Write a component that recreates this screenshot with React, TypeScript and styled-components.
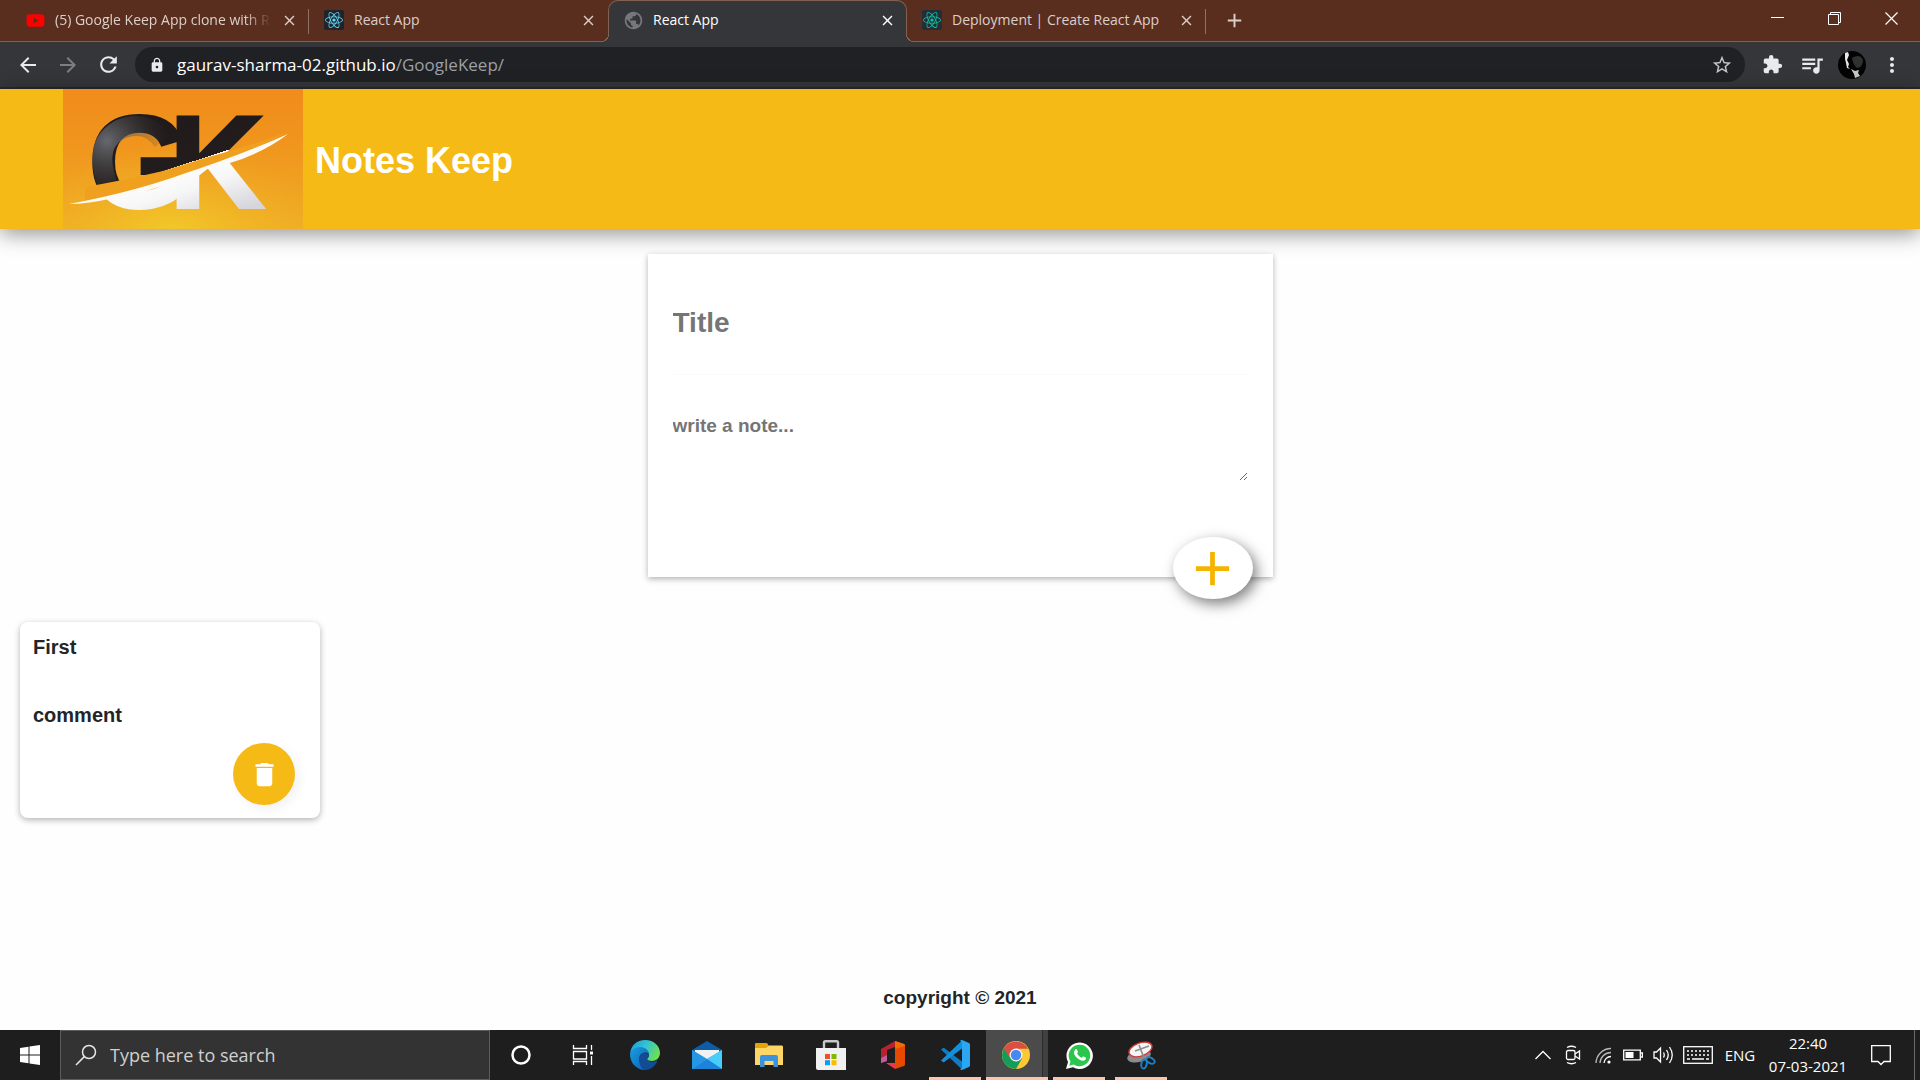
import React from "react";
import styled, { createGlobalStyle, css } from "styled-components";
import {
  MdAdd,
  MdArrowBack,
  MdArrowForward,
  MdDelete,
  MdExtension,
  MdLock,
  MdMoreVert,
  MdQueueMusic,
  MdRefresh,
  MdStarBorder,
  MdClose,
  MdPublic,
} from "react-icons/md";
import { FaReact, FaYoutube } from "react-icons/fa";

const ui = `"Open Sans", "Noto Sans", sans-serif`;
const brand = `"Liberation Sans", Arial, sans-serif`;

const GlobalStyle = createGlobalStyle`
  *, *::before, *::after { box-sizing: border-box; }
  body { margin: 0; background: #fefefe; }
  button { border: 0; padding: 0; background: none; color: inherit; font: inherit; cursor: pointer; }
  svg { display: block; flex-shrink: 0; }
`;

const Screen = styled.div`
  display: flex;
  flex-direction: column;
  min-height: 100vh;
  font-family: ${ui};
`;

/* ---------- browser ---------- */

const TabStrip = styled.nav`
  display: flex;
  height: 42px;
  padding-left: 10px;
  background: #5a2e1e;
  box-shadow: inset 0 -1px #84614f;
  color: #dccfca;
`;

const Tab = styled.div<{ $active?: boolean; $divider?: boolean }>`
  position: relative;
  display: flex;
  align-items: center;
  gap: 10px;
  width: 299px;
  padding: 0 11px 2px 15px;
  ${(p) =>
    p.$divider &&
    css`
      &::after {
        content: "";
        position: absolute;
        right: 0;
        top: 9px;
        width: 1px;
        height: 25px;
        background: #8f7265;
      }
    `}
  ${(p) =>
    p.$active &&
    css`
      padding: 0 10px 3px 14px;
      border: 1px solid #84614f;
      border-bottom: 0;
      border-radius: 10px 10px 0 0;
      background: #35363a;
      color: #ffffff;
      &::before,
      &::after {
        content: "";
        position: absolute;
        bottom: 0;
        width: 8px;
        height: 8px;
      }
      &::before {
        right: 100%;
        background: radial-gradient(circle at 0 0, #5a2e1e 7px, #84614f 7px, #84614f 8px, #35363a 8px);
      }
      &::after {
        left: 100%;
        background: radial-gradient(circle at 100% 0, #5a2e1e 7px, #84614f 7px, #84614f 8px, #35363a 8px);
      }
    `}
`;

const Favicon = styled.span<{ $bg?: string; $color: string }>`
  display: flex;
  align-items: center;
  justify-content: center;
  width: 20px;
  height: 20px;
  border-radius: 2px;
  background: ${(p) => p.$bg ?? "transparent"};
  color: ${(p) => p.$color};
`;

const TabTitle = styled.span<{ $fade?: boolean }>`
  flex: 1;
  overflow: hidden;
  white-space: nowrap;
  font-size: 14px;
  line-height: 20px;
  ${(p) => p.$fade && "mask-image: linear-gradient(90deg, #000 88%, transparent);"}
`;

const NewTab = styled.button`
  width: 56px;
  padding-bottom: 2px;
  display: flex;
  align-items: center;
  justify-content: center;
`;

const WindowControls = styled.div`
  display: flex;
  margin-left: auto;
  height: 36px;
  color: #ffffff;
`;

const WindowButton = styled.button`
  display: flex;
  align-items: center;
  justify-content: center;
  width: 57px;
`;

const Toolbar = styled.div`
  display: flex;
  align-items: center;
  height: 47px;
  padding: 0 8px;
  border-bottom: 2px solid #27282b;
  background: #35363a;
  color: #e8eaed;
`;

const ToolButton = styled.button<{ $dim?: boolean }>`
  display: flex;
  align-items: center;
  justify-content: center;
  width: 40px;
  height: 36px;
  color: ${(p) => (p.$dim ? "#7d7e81" : "inherit")};
`;

const Omnibox = styled.div`
  display: flex;
  align-items: center;
  flex: 1;
  gap: 12px;
  height: 35px;
  margin: 0 7px;
  padding: 0 3px 0 14px;
  border-radius: 18px;
  background: #202124;
`;

const Address = styled.a`
  flex: 1;
  color: #9aa0a6;
  font-size: 17px;
  line-height: 24px;
  text-decoration: none;
  b { color: #ffffff; font-weight: 400; }
`;

/* ---------- notes page ---------- */

const Page = styled.div`
  display: flex;
  flex: 1;
  flex-direction: column;
  font-family: ${brand};
  font-weight: 700;
  color: #212529;
`;

const Header = styled.header`
  display: flex;
  align-items: center;
  gap: 12px;
  height: 140px;
  padding-left: 63px;
  background: #f5ba15;
  box-shadow: 0 5px 20px rgba(0, 0, 0, 0.42);
`;

const Heading = styled.h1`
  margin: 0;
  padding-top: 4px;
  color: #ffffff;
  font-size: 36px;
  line-height: 44px;
`;

const Main = styled.main`
  flex: 1;
  display: flex;
  flex-direction: column;
  gap: 45px;
  padding: 25px 20px;
`;

const NoteForm = styled.form`
  position: relative;
  width: 100%;
  max-width: 625px;
  height: 323px;
  margin: 0 auto;
  padding: 24px 25px 0;
  background: #ffffff;
  box-shadow: 0 2px 6px rgba(0, 0, 0, 0.3);
`;

const TitleInput = styled.input`
  display: block;
  width: 100%;
  height: 97px;
  padding: 0 0 6px;
  border: 0;
  border-bottom: 1px solid #fafafa;
  outline: 0;
  background: transparent;
  color: #212529;
  font: 700 28px ${brand};
  &::placeholder { color: #757575; }
`;

const NoteInput = styled.textarea`
  display: block;
  width: 100%;
  height: 106px;
  padding: 37px 0 0;
  border: 0;
  outline: 0;
  background: transparent;
  color: #212529;
  font: 700 19px/28px ${brand};
  resize: both;
  &::placeholder { color: #757575; }
`;

const AddButton = styled.button`
  position: absolute;
  right: 20px;
  bottom: -22px;
  display: flex;
  align-items: center;
  justify-content: center;
  width: 80px;
  height: 62px;
  border-radius: 50%;
  background: #ffffff;
  color: #f5b400;
  box-shadow: 4px 5px 14px rgba(0, 0, 0, 0.5);
`;

const Notes = styled.section`
  display: flex;
  flex-wrap: wrap;
  gap: 20px;
`;

const NoteCard = styled.article`
  display: flex;
  flex-direction: column;
  width: 300px;
  height: 196px;
  padding: 11px 25px 13px 13px;
  border-radius: 8px;
  background: #ffffff;
  box-shadow: 0 2px 6px rgba(0, 0, 0, 0.3);
`;

const NoteTitle = styled.h2`
  margin: 0;
  font-size: 20px;
  line-height: 28px;
`;

const NoteText = styled.p`
  margin: 40px 0 0;
  font-size: 20px;
  line-height: 28px;
`;

const DeleteButton = styled.button`
  display: flex;
  align-items: center;
  justify-content: center;
  width: 62px;
  height: 62px;
  margin: auto 0 0 auto;
  border-radius: 50%;
  background: #f5ba15;
  color: #ffffff;
  box-shadow: 4px 4px 12px rgba(0, 0, 0, 0.06);
`;

const Footer = styled.footer`
  padding-bottom: 18px;
  font-size: 19px;
  line-height: 28px;
  text-align: center;
`;

/* ---------- taskbar ---------- */

const Taskbar = styled.footer`
  display: flex;
  align-items: stretch;
  height: 50px;
  background: #1e1e1e;
  color: #ffffff;
`;

const StartButton = styled.button`
  display: flex;
  align-items: center;
  justify-content: center;
  width: 60px;
`;

const SearchBox = styled.label`
  display: flex;
  align-items: center;
  gap: 13px;
  width: 430px;
  padding: 0 14px;
  border: 1px solid #5c5c5c;
  background: #333333;
  input {
    flex: 1;
    min-width: 0;
    padding: 0;
    border: 0;
    outline: 0;
    background: none;
    color: #ffffff;
    font: 18px ${ui};
  }
  input::placeholder { color: #d0d0d0; }
`;

const AppButton = styled.button<{ $open?: boolean; $current?: boolean }>`
  display: flex;
  align-items: center;
  justify-content: center;
  width: 52px;
  margin: 0 5px;
  border-bottom: 3px solid ${(p) => (p.$open ? "#fcc4b0" : "transparent")};
  padding-top: 3px;
  ${(p) =>
    p.$current &&
    css`
      width: 62px;
      margin: 0;
      padding-right: 2px;
      background: linear-gradient(90deg, #4b4b4b 56px, #2a2a2a 56px, #2a2a2a 57px, #404040 57px);
    `}
`;

const Tray = styled.div`
  display: flex;
  align-items: center;
  margin-left: auto;
  font-size: 15px;
`;

const TrayButton = styled.button<{ $w?: number }>`
  display: flex;
  align-items: center;
  justify-content: center;
  width: ${(p) => p.$w ?? 30}px;
  height: 50px;
`;

const Language = styled(TrayButton)`
  width: 50px;
  padding-right: 6px;
`;

const Clock = styled.time`
  width: 80px;
  line-height: 23px;
  text-align: center;
  white-space: nowrap;
`;

const ShowDesktop = styled.button`
  width: 6px;
  height: 50px;
  border-left: 1px solid #6a6a6a;
`;

/* ---------- drawings ---------- */

const BrandLogo = () => (
  <svg width="240" height="140" viewBox="0 0 240 140" role="img" aria-label="GK">
    <defs>
      <linearGradient id="sky" x1="0" y1="0" x2="0" y2="1">
        <stop offset="0" stopColor="#f08c1b" />
        <stop offset=".4" stopColor="#f0951d" />
        <stop offset="1" stopColor="#efae25" />
      </linearGradient>
      <radialGradient id="glow" cx=".45" cy="1.05" r=".65">
        <stop offset="0" stopColor="#f2cb29" />
        <stop offset="1" stopColor="#f2b025" stopOpacity="0" />
      </radialGradient>
      {/* runs across the slash: dark metal above it, white below it */}
      <linearGradient id="metal" gradientUnits="userSpaceOnUse" x1="87" y1="0" x2="127" y2="140">
        <stop offset="0" stopColor="#1d1718" />
        <stop offset=".3" stopColor="#2b2524" />
        <stop offset=".62" stopColor="#231c1c" />
        <stop offset=".62" stopColor="#ffffff" />
        <stop offset="1" stopColor="#dcdbe0" />
      </linearGradient>
      <linearGradient id="cut" gradientUnits="userSpaceOnUse" x1="97" y1="0" x2="140" y2="133">
        <stop offset="0" stopColor="#1f1919" />
        <stop offset=".565" stopColor="#231c1c" />
        <stop offset=".565" stopColor="#ffffff" />
        <stop offset=".75" stopColor="#f6f6f7" />
        <stop offset="1" stopColor="#d6d5db" />
      </linearGradient>
      <radialGradient id="sheen" gradientUnits="userSpaceOnUse" cx="44" cy="52" r="62">
        <stop offset="0" stopColor="#73767d" stopOpacity=".85" />
        <stop offset="1" stopColor="#3a3634" stopOpacity="0" />
      </radialGradient>
      <clipPath id="upper"><path d="M0 0H118V84L0 114Z" /></clipPath>
    </defs>
    <rect width="240" height="140" fill="url(#sky)" />
    <rect width="240" height="140" fill="url(#glow)" />
    <text
      x="26 107"
      y="118"
      fontFamily="Liberation Sans, Arial, sans-serif"
      fontWeight="700"
      fontSize="129"
      fill="url(#cut)"
      stroke="url(#cut)"
      strokeWidth="4"
    >
      GK
    </text>
    <g clipPath="url(#upper)" fill="none" stroke="url(#sheen)" strokeWidth="20">
      <path d="M44 94Q30 54 58 40Q84 30 100 52" />
    </g>
    <path d="M22 98Q57 92 100 82L142 69Q190 56 225 43Q180 66 120 87Q70 104 22 112Z" fill="#f0a01f" />
    <path d="M6 115Q70 103 120 85Q178 66 225 45Q200 64 167 74Q145 76 120 89Q85 104 46 110Q24 115 6 115Z" fill="#fbfaf6" />
  </svg>
);

const WindowsLogo = () => (
  <svg width="22" height="22" viewBox="0 0 22 22" fill="#fff">
    <path d="M1 4L9.500 2.800V10.500H1ZM10.500 2.600L21 1V10.500H10.500ZM1 11.500H9.500V19.200L1 18ZM10.500 11.500H21V21L10.500 19.400Z" />
  </svg>
);

const SearchIcon = () => (
  <svg width="22" height="22" viewBox="0 0 22 22" fill="none" stroke="#e6e6e6" strokeWidth="1.500">
    <circle cx="14" cy="8" r="6.500" />
    <path d="M9.300 12.600L1 21" />
  </svg>
);

const Cortana = () => (
  <svg width="22" height="22" viewBox="0 0 22 22" fill="none" stroke="#fff" strokeWidth="2.500">
    <circle cx="11" cy="11" r="8.500" />
  </svg>
);

const TaskView = () => (
  <svg width="22" height="22" viewBox="0 0 22 22" fill="none" stroke="#fff" strokeWidth="1.300">
    <path d="M1.500 1V4.500H14.500V1M1.500 7.500H14.500V15H1.500ZM1.500 21V17.500H14.500V21M19.500 1V6M19.500 12V21" />
    <path d="M18 7.500h3v3h-3z" fill="#fff" stroke="none" />
  </svg>
);

const Edge = () => (
  <svg width="30" height="30" viewBox="0 0 30 30">
    <defs>
      <linearGradient id="edgeTop" x1="0" y1=".2" x2="1" y2=".6">
        <stop offset="0" stopColor="#1ba0dd" />
        <stop offset=".5" stopColor="#35c5cf" />
        <stop offset="1" stopColor="#6fe04c" />
      </linearGradient>
      <linearGradient id="edgeLow" x1="0" y1="0" x2="1" y2="1">
        <stop offset="0" stopColor="#1b9de2" />
        <stop offset="1" stopColor="#0a5fb4" />
      </linearGradient>
    </defs>
    <path d="M0 14C1 5 7 0 15 0c9 0 15 6 15 13 0 5-4 8-8 8-3 0-5-1-5-2 0-.7 2-1.500 2-4 0-4-4-7-9-7-5 0-9 3-10 6z" fill="url(#edgeTop)" />
    <path d="M0 14c1-4 5-7 10-7 6 0 9 4 9 8-1-2-3-3-5-2-5 2-5 13 3 17-9 1-17-6-17-16z" fill="url(#edgeLow)" />
    <path d="M9 19c0-4 3-7 6-6 2 0 3 1 4 2 0 2.500-2 3.300-2 4 0 1 2 2.500 5 2.500 2 0 4-.5 5.500-1.500 0 2-4 10-12.500 10-3 0-6-5-6-11z" fill="#124c94" />
  </svg>
);

const Mail = () => (
  <svg width="30" height="28" viewBox="0 0 30 28">
    <path d="M0 9L15 0L30 9V20H0Z" fill="#0c5ca8" />
    <path d="M3 9H27V15L15 19L3 15Z" fill="#f1f1f1" />
    <path d="M0 9L15 18L30 9V28H0Z" fill="#2fb0ee" />
    <path d="M15 18L30 9V28Z" fill="#48ccfa" />
    <path d="M0 28L15 18L30 28Z" fill="#1d83d8" />
    <path d="M0 9L15 18L0 28Z" fill="#2596e4" />
  </svg>
);

const Explorer = () => (
  <svg width="28" height="24" viewBox="0 0 28 24">
    <path d="M0 1Q0 0 1 0H12L14 3H27V10H0Z" fill="#e3a309" />
    <path d="M0 5H11L14 2.500H27Q28 2.500 28 4V22H0Z" fill="#fdd666" />
    <path d="M5 24V14Q5 12 7 12H21Q23 12 23 14V24H18.500V18H9.500V24Z" fill="#3c92dc" />
  </svg>
);

const Store = () => (
  <svg width="30" height="30" viewBox="0 0 30 30">
    <path d="M8 9V2.500Q8 1.200 9.300 1.200H20.700Q22 1.200 22 2.500V9" fill="none" stroke="#c8c8c8" strokeWidth="2.400" />
    <path d="M0 8H30V30H2Q0 30 0 28Z" fill="#f1f1f1" />
    <path d="M9 14h5v5H9z" fill="#f0502a" />
    <path d="M15.500 14h5v5h-5z" fill="#7fb900" />
    <path d="M9 20.200h5v5H9z" fill="#00a3ee" />
    <path d="M15.500 20.200h5v5h-5z" fill="#fdb900" />
  </svg>
);

const Office = () => (
  <svg width="24" height="28" viewBox="0 0 24 28">
    <path d="M0 8L14 0V6L6 9V20L0 22Z" fill="#b5232f" />
    <path d="M0 17L6 14V20L0 22Z" fill="#c25b9b" />
    <path d="M5 22H14V28Z" fill="#f3324c" />
    <path d="M14 0L23 3Q24 3.500 24 5V23Q24 24.500 23 25L14 28Z" fill="#e64a00" />
    <path d="M14 0L23 3Q24 3.500 24 5L14 8Z" fill="#f36a0a" />
  </svg>
);

const Code = () => (
  <svg width="30" height="30" viewBox="0 0 30 30">
    <path d="M1 9.500L3 8Q3.500 7.600 4.200 8L22 21.500V29.500Z" fill="#0e7bc4" />
    <path d="M1 20.500L3 22Q3.500 22.400 4.200 22L22 8.500V.5Z" fill="#1390dc" />
    <path d="M22 0L29 3Q30 3.500 30 5V25Q30 26.500 29 27L22 30Q20.500 30 20 29Q22 29 22 27V3Q22 1 20 1Q20.500 0 22 0Z" fill="#2aa6f3" />
  </svg>
);

const Chrome = () => (
  <svg width="28" height="28" viewBox="0 0 28 28">
    <circle cx="14" cy="14" r="14" fill="#fcc934" />
    <path d="M14 14L1.880 7A14 14 0 0 0 14 28L20 17.500Z" fill="#149d58" />
    <path d="M1.880 7A14 14 0 0 1 26.120 7.800H14L8 17.500Z" fill="#da4f42" />
    <circle cx="14" cy="14" r="6.500" fill="#f4f4f4" />
    <circle cx="14" cy="14" r="5.200" fill="#4688f4" />
  </svg>
);

const Whatsapp = () => (
  <svg width="27" height="27" viewBox="0 0 27 27">
    <path d="M0 27L2 20A13.200 13.200 0 1 1 7 25.200Z" fill="#fff" />
    <path d="M3.300 23.700L4.500 19.500A10.800 10.800 0 1 1 7.700 22.600Z" fill="#2cc64e" />
    <path d="M9.300 7.500c.8-.8 1.600-.4 1.800.2l.8 2c.2.600-.8 1.500-.8 1.900 1 2 2.500 3.300 4.500 4.100.5.100 1.300-1.600 1.900-1.300l2.200 1.100c.6.300.2 1.800-.4 2.300-1.300 1.300-3.300 1-5.300.1-2.600-1.100-4.700-3.300-5.600-5.300-.7-1.700-.6-3.700.9-5.100z" fill="#fff" />
  </svg>
);

const Snip = () => (
  <svg width="29" height="29" viewBox="0 0 29 29">
    <ellipse cx="12" cy="15" rx="12" ry="6" transform="rotate(-14 12 15)" fill="#8c8c8c" />
    <ellipse cx="13.500" cy="8.500" rx="12" ry="6.500" transform="rotate(-20 13.500 8.500)" fill="#f5f5f5" stroke="#cf3b3b" strokeWidth="1.400" />
    <path d="M12 4L17 17M22 5L8 10" stroke="#8d8d8d" strokeWidth="1.600" />
    <g fill="none" stroke="#1c82c9" strokeWidth="1.900">
      <ellipse cx="17" cy="23" rx="2.700" ry="4.500" transform="rotate(12 17 23)" />
      <ellipse cx="23.500" cy="19.500" rx="4.500" ry="2.700" transform="rotate(28 23.500 19.500)" />
    </g>
  </svg>
);

const line = { fill: "none", stroke: "#fff", strokeWidth: 1.3 };

const ChevronUp = () => (
  <svg width="16" height="10" viewBox="0 0 16 10" {...line}><path d="M.5 9L8 1.500L15.500 9" /></svg>
);

const MeetNow = () => (
  <svg width="16" height="20" viewBox="0 0 16 20" {...line}>
    <rect x="1.500" y="5.500" width="8.500" height="9" rx="1.500" />
    <path d="M10 9L14.500 6V14L10 11M2 2.500Q6.500 0 11 2.500M2 17.500Q6.500 20 11 17.500" />
  </svg>
);

const Wifi = () => (
  <svg width="17" height="17" viewBox="0 0 17 17" {...line}>
    <path d="M1 16A15 15 0 0 1 16 1.500M5 16A11 11 0 0 1 16 5.500" stroke="#bbb" />
    <path d="M9 16A7 7 0 0 1 16 9.500" />
    <circle cx="14" cy="15" r="1.600" fill="#fff" stroke="none" />
  </svg>
);

const Battery = () => (
  <svg width="20" height="12" viewBox="0 0 20 12" {...line}>
    <path d="M.7 1.200H17.300V10.800H.7ZM18 4H19.400V8H18" />
    <path d="M2.500 3H10.500V9H2.500Z" fill="#fff" stroke="none" />
  </svg>
);

const Volume = () => (
  <svg width="21" height="18" viewBox="0 0 21 18" {...line}>
    <path d="M1 6H3.500L7.500 2V16L3.500 12H1ZM10.500 6.500Q12 9 10.500 11.500M13.500 4Q17 9 13.500 14M16.500 1Q22 9 16.500 17" />
  </svg>
);

const KeyboardIcon = () => (
  <svg width="30" height="18" viewBox="0 0 30 18" {...line}>
    <rect x=".7" y=".7" width="28.600" height="16.600" />
    <path d="M4 5H26M4 9H26" strokeDasharray="2 2" />
    <path d="M4 13H7M9 13H21M23 13H26" />
  </svg>
);

const Notification = () => (
  <svg width="20" height="21" viewBox="0 0 20 21" {...line}>
    <path d="M.7 .7H19.300V16.500H13L10 19.500L7 16.500H.7Z" />
  </svg>
);

const Minimise = () => <svg width="13" height="13" viewBox="0 0 13 13" stroke="#fff"><path d="M0 5.500H13" /></svg>;
const Restore = () => (
  <svg width="13" height="13" viewBox="0 0 13 13" fill="none" stroke="#fff">
    <path d="M.5 2.500H10.500V12.500H.5ZM2.500 2.500V.5H12.500V10.500H10.500" />
  </svg>
);
const CloseWindow = () => (
  <svg width="13" height="13" viewBox="0 0 13 13" stroke="#fff" strokeWidth="1.200"><path d="M.5 .5L12.500 12.500M12.500 .5L.5 12.500" /></svg>
);

/* ---------- app ---------- */

const tabs = [
  { title: "(5) Google Keep App clone with React", icon: <FaYoutube size={19} />, color: "#ff0000", fade: true, divider: true },
  { title: "React App", icon: <FaReact size={18} />, color: "#61dafb", bg: "#20232a" },
  { title: "React App", icon: <MdPublic size={21} />, color: "#75787c", active: true },
  { title: "Deployment | Create React App", icon: <FaReact size={18} />, color: "#09c8a0", bg: "#262c38", divider: true },
];

const apps = [
  { name: "Cortana", icon: <Cortana /> },
  { name: "Task View", icon: <TaskView /> },
  { name: "Edge", icon: <Edge /> },
  { name: "Mail", icon: <Mail /> },
  { name: "File Explorer", icon: <Explorer /> },
  { name: "Store", icon: <Store /> },
  { name: "Office", icon: <Office /> },
  { name: "Visual Studio Code", icon: <Code />, open: true },
  { name: "Chrome", icon: <Chrome />, open: true, current: true },
  { name: "WhatsApp", icon: <Whatsapp />, open: true },
  { name: "Snipping Tool", icon: <Snip />, open: true },
];

const notes = [{ title: "First", text: "comment" }];

export default function App() {
  return (
    <Screen>
      <GlobalStyle />
      <TabStrip aria-label="Tabs">
        {tabs.map((t, i) => (
          <Tab key={i} $active={t.active} $divider={t.divider}>
            <Favicon $bg={t.bg} $color={t.color}>{t.icon}</Favicon>
            <TabTitle $fade={t.fade}>{t.title}</TabTitle>
            <button aria-label="Close tab"><MdClose size={17} /></button>
          </Tab>
        ))}
        <NewTab aria-label="New tab"><MdAdd size={23} /></NewTab>
        <WindowControls>
          <WindowButton aria-label="Minimise"><Minimise /></WindowButton>
          <WindowButton aria-label="Restore"><Restore /></WindowButton>
          <WindowButton aria-label="Close"><CloseWindow /></WindowButton>
        </WindowControls>
      </TabStrip>
      <Toolbar>
        <ToolButton aria-label="Back"><MdArrowBack size={24} /></ToolButton>
        <ToolButton aria-label="Forward" $dim><MdArrowForward size={24} /></ToolButton>
        <ToolButton aria-label="Reload"><MdRefresh size={25} /></ToolButton>
        <Omnibox>
          <MdLock size={16} />
          <Address href="#"><b>gaurav-sharma-02.github.io</b>/GoogleKeep/</Address>
          <ToolButton aria-label="Bookmark"><MdStarBorder size={22} color="#c4c6c9" /></ToolButton>
        </Omnibox>
        <ToolButton aria-label="Extensions"><MdExtension size={21} /></ToolButton>
        <ToolButton aria-label="Media"><MdQueueMusic size={26} /></ToolButton>
        <ToolButton aria-label="Profile">
          <svg width="28" height="28" viewBox="0 0 28 28">
            <circle cx="14" cy="14" r="14" fill="#030303" />
            <path d="M14 7Q22 2 25 9Q25 16 19 17Q15 14 14 7Z" fill="#303030" />
            <path d="M7 2L10 1L11 4L9 9L11 13L10 16L12 18L9 17L8 12L7 8Z" fill="#e8e8e8" />
            <path d="M13 18L17 20L21 19L20 22L22 25L17 27L16 23Z" fill="#c8c8c8" />
          </svg>
        </ToolButton>
        <ToolButton aria-label="Menu"><MdMoreVert size={24} /></ToolButton>
      </Toolbar>

      <Page>
        <Header>
          <BrandLogo />
          <Heading>Notes Keep</Heading>
        </Header>
        <Main>
          <NoteForm onSubmit={(e) => e.preventDefault()}>
            <TitleInput placeholder="Title" aria-label="Title" />
            <NoteInput placeholder="write a note..." aria-label="Note" />
            <AddButton aria-label="Add note"><MdAdd size={57} /></AddButton>
          </NoteForm>
          <Notes>
            {notes.map((n) => (
              <NoteCard key={n.title}>
                <NoteTitle>{n.title}</NoteTitle>
                <NoteText>{n.text}</NoteText>
                <DeleteButton aria-label="Delete note"><MdDelete size={31} /></DeleteButton>
              </NoteCard>
            ))}
          </Notes>
        </Main>
        <Footer>copyright © 2021</Footer>
      </Page>

      <Taskbar>
        <StartButton aria-label="Start"><WindowsLogo /></StartButton>
        <SearchBox>
          <SearchIcon />
          <input placeholder="Type here to search" aria-label="Type here to search" />
        </SearchBox>
        {apps.map((a) => (
          <AppButton key={a.name} aria-label={a.name} $open={a.open} $current={a.current}>{a.icon}</AppButton>
        ))}
        <Tray>
          <TrayButton aria-label="Show hidden icons"><ChevronUp /></TrayButton>
          <TrayButton aria-label="Meet now"><MeetNow /></TrayButton>
          <TrayButton aria-label="Network"><Wifi /></TrayButton>
          <TrayButton aria-label="Battery"><Battery /></TrayButton>
          <TrayButton aria-label="Volume"><Volume /></TrayButton>
          <TrayButton aria-label="Touch keyboard" $w={40}><KeyboardIcon /></TrayButton>
          <Language>ENG</Language>
          <Clock>22:40<br />07-03-2021</Clock>
          <TrayButton aria-label="Notifications" $w={66}><Notification /></TrayButton>
          <ShowDesktop aria-label="Show desktop" />
        </Tray>
      </Taskbar>
    </Screen>
  );
}
